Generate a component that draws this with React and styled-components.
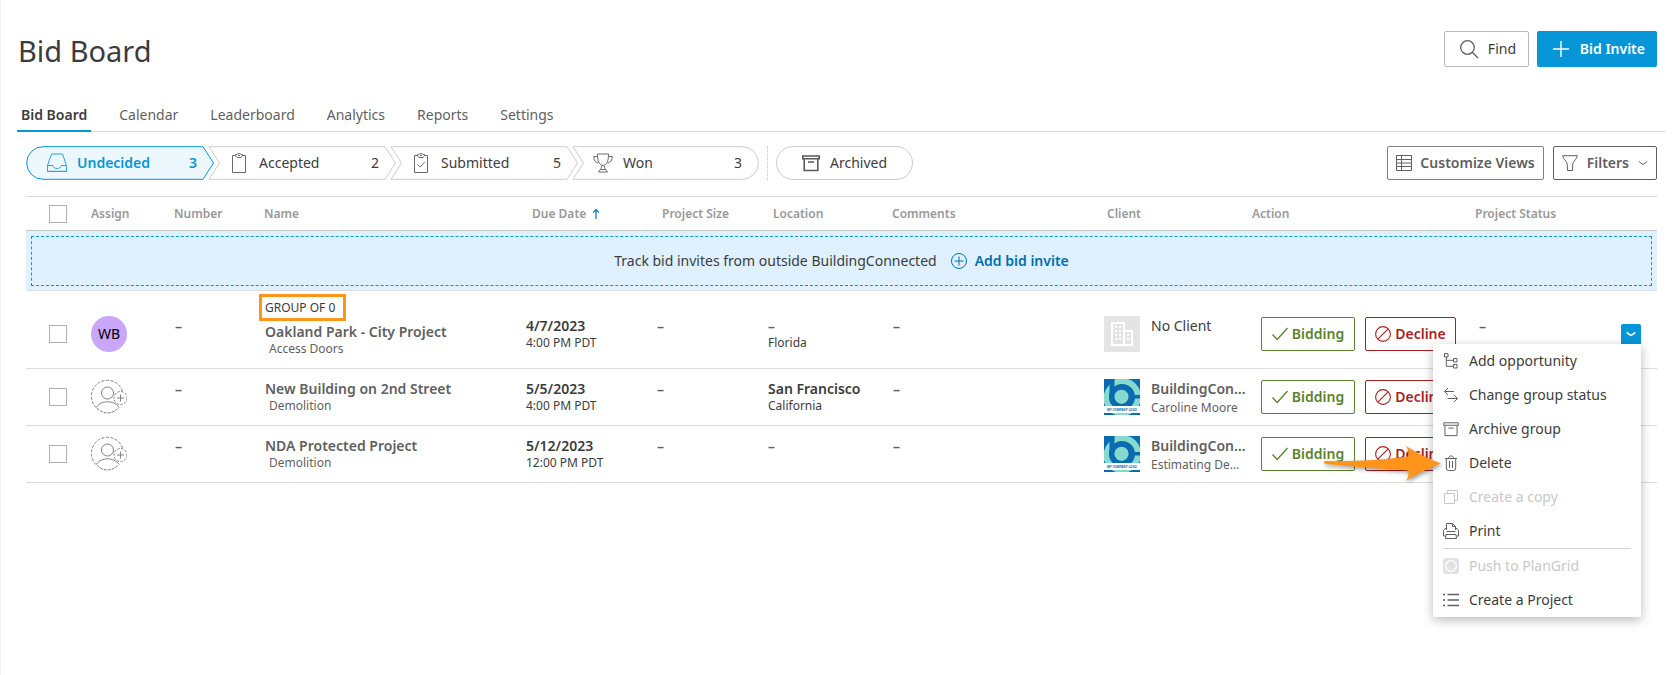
import React from 'react';
import styled, { createGlobalStyle, css } from 'styled-components';

const colors = {
  text: '#3c3c3c',
  soft: '#5f5f5f',
  muted: '#999999',
  line: '#dcdcdc',
  blue: '#0696d7',
  link: '#006eaf',
  green: '#5a8228',
  red: '#aa1e1e',
  orange: '#ff941a',
};

const GlobalStyle = createGlobalStyle`
  *, *::before, *::after { box-sizing: border-box; }
  body {
    margin: 0;
    background: #fff;
    color: ${colors.text};
    font: 400 14px/18px "Noto Sans", sans-serif;
  }
  button, input { font: inherit; color: inherit; margin: 0; }
  button { cursor: pointer; }
`;

/* ---------- icons ---------- */

const Svg = styled.svg`
  display: block;
  flex: none;
  fill: none;
  stroke: currentColor;
  stroke-width: ${(p) => p.$stroke || 1};
`;

const Icon = ({ size = 20, box = 20, stroke, children }) => (
  <Svg width={size} height={size} viewBox={`0 0 ${box} ${box}`} $stroke={stroke} aria-hidden="true">
    {children}
  </Svg>
);

const SearchIcon = () => (
  <Icon stroke={1.3}>
    <circle cx="8.5" cy="8.5" r="6.8" />
    <path d="M13.3 13.3 19 19" />
  </Icon>
);
const PlusIcon = () => (
  <Icon size={16} box={16} stroke={1.4}>
    <path d="M8 0v16M0 8h16" />
  </Icon>
);
const InboxIcon = () => (
  <Icon>
    <path d="M.5 12.5 4.5 1h11l4 11.5v6H.5zM.5 12.5h5.3c.5 2 2 3 4.2 3s3.7-1 4.2-3h5.3M.5 18.3h19" />
  </Icon>
);
const ClipboardIcon = ({ checked }) => (
  <Icon>
    <path d="M6.5 2.5H3.500v17h13v-17H13.500" />
    <path d="M6.500 1.500h1.500C8.300.300 11.700.300 12 1.500h1.500v1.200L12 4.500H8L6.500 2.700z" />
    <path d="M9 2.500h2" />
    {checked && <path d="m6.500 11.500 2.700 2.500 4.500-5" />}
  </Icon>
);
const TrophyIcon = () => (
  <Icon>
    <path d="M4.500 1h11c0 6-1 11-5.500 11.500C5.500 12 4.500 7 4.500 1zM4.500 3.500H.700c0 4 1.800 6 4.500 6.500M15.500 3.500h3.800c0 4-1.800 6-4.500 6.500M8.700 12.500c0 2.500-1 3.500-3.200 6.500h9c-2.200-3-3.200-4-3.200-6.500M7.500 16.500h5" />
  </Icon>
);
const ArchiveIcon = ({ size = 18, stroke = 1.6 }) => (
  <Icon size={size} box={18} stroke={stroke}>
    <path d="M.8 2h16.400v2.800H.800zM2.200 5v11.500h13.600V5M6 8h6" />
  </Icon>
);
const GridIcon = () => (
  <Icon size={16} box={16}>
    <path d="M.5.500h15v15H.500zM5.500.500v15M.500 4.500h15M.500 8h15M.500 11.500h15" />
  </Icon>
);
const FilterIcon = () => (
  <Icon size={16} box={16}>
    <path d="M.700.700h14.600C15 4 12 5.500 10.800 8.500L10.500 15.500h-5l-.3-7C4 5.500 1 4 .700.700z" />
  </Icon>
);
const ChevronIcon = ({ stroke }) => (
  <Icon size={10} box={10} stroke={stroke}>
    <path d="M.800 3.300C2 4.300 4 6.300 5 6.300s3-2 4.200-3" />
  </Icon>
);
const SortIcon = () => (
  <Icon size={10} box={10} stroke={1.2}>
    <path d="M5 .500V10M2 3.700l3-3 3 3" />
  </Icon>
);
const CirclePlusIcon = () => (
  <Icon size={16} box={16}>
    <circle cx="8" cy="8" r="7.5" />
    <path d="M8 3.500v9M3.500 8h9" />
  </Icon>
);
const CheckIcon = () => (
  <Icon size={16} box={16} stroke={1.3}>
    <path d="m.500 8.500 4.700 5L15.500 2" />
  </Icon>
);
const BlockIcon = () => (
  <Icon size={16} box={16} stroke={1.1}>
    <circle cx="8" cy="8" r="7.4" />
    <path d="M2.800 13.200 13.200 2.800" />
  </Icon>
);
const AssignIcon = () => (
  <Icon size={36} box={36}>
    <g stroke="#808080">
      <path d="M31.500 12A16 16 0 1 0 5 28.500" strokeDasharray="3 1.5" />
      <path d="M6 29.200c3 3 6.500 4.800 10.500 4.800s8-2 10.500-4.800" strokeDasharray="3 1" />
      <circle cx="16.5" cy="14" r="6" />
      <path d="M5.300 28.500C8 24.500 12 22.800 16.500 22.800S25.500 24.500 28.200 28.500" />
      <circle cx="29.5" cy="19" r="6.5" strokeDasharray="2.5 1.3" />
      <path d="M29.500 15.500v7M26 19h7" />
    </g>
  </Icon>
);
const BuildingIcon = () => (
  <svg width="36" height="36" viewBox="0 0 36 36" role="img" aria-label="No client logo">
    <path fill="#e4e4e4" d="M0 0h36v36H0z" />
    <path fill="none" stroke="#fff" strokeWidth="2" d="M8 7h12v22H8zM20 15h8v14h-8z" />
    <path
      fill="#fff"
      d="M11 10h2v2h-2zm4 0h2v2h-2zm-4 4h2v2h-2zm4 0h2v2h-2zm-4 4h2v2h-2zm4 0h2v2h-2zm-4 4h2v2h-2zm4 0h2v2h-2zM23 18h2v2h-2zm0 4h2v2h-2z"
    />
  </svg>
);
const CompanyLogo = () => (
  <svg width="36" height="36" viewBox="0 0 36 36" role="img" aria-label="Company logo">
    <path fill="#0a6bb0" d="M0 0h36v36H0z" />
    <circle cx="18" cy="18" r="16" fill="none" stroke="#86d9cd" strokeWidth="6" />
    <path fill="#0a6bb0" d="M5.500 0h5v18h-5zM28 16h8v3.500h-8z" />
    <path fill="#0a6bb0" d="M0 0h6v5Q2 9 0 15z" />
    <circle cx="17.5" cy="17.8" r="9.6" fill="#86d9cd" stroke="#0a6bb0" strokeWidth="5" />
    <path fill="#fff" d="M0 27h36v7H0z" />
    <text x="18" y="32" fontSize="3" fontWeight="700" textAnchor="middle" fill="#0a6bb0">
      MY COMPANY LOGO
    </text>
  </svg>
);
const TreeIcon = () => (
  <Icon size={16} box={16}>
    <path d="M1.500.500h3.500v3.500H1.500zM10.500 5.500H14V9h-3.500zM10.500 11.500H14V15h-3.500zM3.300 4v9.300h7.200M3.300 7.300h7.200" />
  </Icon>
);
const SwapIcon = () => (
  <Icon size={16} box={16}>
    <path d="M11 4.500H1.500M5 1 1.500 4.500 5 8M4.500 11.500h10M11 8l3.500 3.500L11 15" />
  </Icon>
);
const TrashIcon = () => (
  <Icon size={16} box={16}>
    <path d="M2 3.500h12M5.500 3.500c0-3.500 5-3.500 5 0M3.300 3.500v9.500q0 2.500 2 2.500h5.400q2 0 2-2.500V3.500M6.500 6v7M9.500 6v7" />
  </Icon>
);
const CopyIcon = () => (
  <Icon size={16} box={16}>
    <path d="M1.500 4.500h10v10h-10zM4.500 4.500v-3h10v10h-3" />
  </Icon>
);
const PrintIcon = () => (
  <Icon size={16} box={16}>
    <path d="M3.500 7V.500h6l3 3V7M9.500.500v3h3M3.500 5.500H2L.500 7.500v5.500H2.500M12.500 5.500H14l1.500 2v5.500h-2M3.500 8.500h9M3 11.500h10l.5 4h-11z" />
  </Icon>
);
const PlanGridIcon = () => (
  <svg width="16" height="16" viewBox="0 0 16 16" aria-hidden="true">
    <rect width="16" height="16" rx="3" fill="#e2e2e2" />
    <circle cx="8" cy="8" r="5.3" fill="#e2e2e2" stroke="#fff" strokeWidth="1.3" />
  </svg>
);
const ListIcon = () => (
  <Icon size={16} box={16} stroke={1.3}>
    <path d="M0 2.500h2M0 8h2M0 13.500h2M4.500 2.500H16M4.500 8H16M4.500 13.500H16" />
  </Icon>
);

/* ---------- page frame ---------- */

const Page = styled.div`
  min-height: 100vh;
  border-left: 1px solid #f3f3f3;
  padding-left: 16px;
`;

const Header = styled.header`
  display: flex;
  justify-content: space-between;
  align-items: flex-start;
  padding: 31px 18px 29px 1px;
`;

const Title = styled.h1`
  margin: 0;
  font-size: 29px;
  font-weight: 400;
  line-height: 40px;
`;

const HeaderActions = styled.div`
  display: flex;
  gap: 8px;
`;

const HeaderButton = styled.button`
  display: flex;
  align-items: center;
  justify-content: space-between;
  height: 36px;
  border-radius: 2px;
  ${(p) =>
    p.$primary
      ? css`
          width: 120px;
          padding: 0 12px 0 16px;
          border: 0;
          background: ${colors.blue};
          color: #fff;
          font-weight: 600;
        `
      : css`
          width: 85px;
          padding: 0 12px 0 14px;
          border: 1px solid #b8b8b8;
          background: #fff;
          color: ${colors.text};
          svg { color: ${colors.soft}; }
        `}
`;

const Tabs = styled.nav`
  display: flex;
  gap: 24px;
  height: 32px;
  margin-right: 9px;
  border-bottom: 1px solid ${colors.line};
`;

const Tab = styled.a`
  height: 32px;
  padding: 6px 4px 0;
  color: ${colors.soft};
  text-decoration: none;
  border-bottom: 2px solid transparent;
  ${(p) =>
    p.$active &&
    css`
      color: ${colors.text};
      font-weight: 600;
      border-color: ${colors.blue};
    `}
`;

/* ---------- pipeline bar ---------- */

const Content = styled.main`
  padding: 14px 18px 0 9px;
`;

const Toolbar = styled.div`
  display: flex;
  justify-content: space-between;
  margin-bottom: 16px;
`;

const Group = styled.div`
  display: flex;
  gap: ${(p) => p.$gap || 0}px;
`;

const StageButton = styled.button`
  position: relative;
  display: flex;
  align-items: center;
  gap: 10px;
  width: ${(p) => p.$width}px;
  height: 34px;
  padding: 0 17px 0 21px;
  border: 0;
  background: none;
  text-align: left;
  color: ${(p) => (p.$active ? colors.blue : colors.text)};
  font-weight: ${(p) => (p.$active ? 600 : 400)};
  & + & { margin-left: -6px; }
  & > svg:not(:first-child) {
    position: relative;
    color: ${(p) => (p.$active ? '#2fa3dc' : '#6a6a6a')};
  }
`;

const StageShape = styled.svg`
  position: absolute;
  inset: 0;
  stroke: ${(p) => (p.$active ? colors.blue : '#cccccc')};
  fill: ${(p) => (p.$active ? '#edf7fe' : 'none')};
`;

const StageLabel = styled.span`
  position: relative;
  flex: 1;
`;

const StageCount = styled.span`
  position: relative;
`;

const Divider = styled.span`
  width: 1px;
  height: 34px;
  margin: 0 8px;
  border-left: 1px dotted #c4c4c4;
`;

const ArchivedButton = styled.button`
  display: flex;
  align-items: center;
  gap: 10px;
  height: 34px;
  padding: 0 25px;
  border: 1px solid #cccccc;
  border-radius: 17px;
  background: #fff;
  svg { color: #5a5a5a; }
`;

const OutlineButton = styled.button`
  display: flex;
  align-items: center;
  gap: ${(p) => p.$gap || 8}px;
  height: 34px;
  padding: 0 8px;
  border: 1px solid ${(p) => p.$border || '#808080'};
  border-radius: 2px;
  background: #fff;
  color: ${colors.soft};
  font-weight: 600;
`;

/* ---------- table ---------- */

const Table = styled.table`
  width: 100%;
  table-layout: fixed;
  border-spacing: 0;
`;

const HeadCell = styled.th`
  height: 35px;
  padding: 0 0 0 ${(p) => p.$indent || 0}px;
  border-top: 1px solid ${colors.line};
  border-bottom: 1px solid #c8c8c8;
  color: ${colors.muted};
  font-size: 12px;
  font-weight: 600;
  text-align: left;
  white-space: nowrap;
`;

const SortLabel = styled.span`
  display: flex;
  align-items: center;
  gap: 5px;
  svg { color: ${colors.link}; }
`;

const Cell = styled.td`
  height: ${(p) => (p.$tall ? 78 : 57)}px;
  padding: ${(p) => (p.$tall ? 9 : 0)}px 0 0 ${(p) => p.$indent || 0}px;
  border-bottom: 1px solid ${colors.line};
  vertical-align: middle;
`;

const NameCell = styled(Cell)`
  padding-top: 0;
  padding-bottom: ${(p) => (p.$tall ? 8 : 0)}px;
`;

const Checkbox = styled.input.attrs({ type: 'checkbox' })`
  display: block;
  appearance: none;
  width: 18px;
  height: 18px;
  margin: 0 0 0 23px;
  border: 1px solid #b0b0b0;
  background: #fff;
`;

const BannerCell = styled.td`
  height: 60px;
  padding: 5px 5px 4px;
  background: #dff1fe;
  border-bottom: 1px solid ${colors.line};
`;

const Banner = styled.div`
  display: flex;
  align-items: center;
  justify-content: center;
  gap: 14px;
  height: 50px;
  border: 1px dashed ${colors.blue};
`;

const BannerLink = styled.button`
  display: flex;
  align-items: center;
  gap: 8px;
  padding: 0;
  border: 0;
  background: none;
  color: ${colors.link};
  font-weight: 600;
`;

const Avatar = styled.div`
  display: grid;
  place-items: center;
  width: 36px;
  height: 36px;
  border-radius: 50%;
  background: #c9a6f9;
  color: #000;
`;

const AssignButton = styled.button`
  display: block;
  padding: 0;
  border: 0;
  background: none;
`;

const Lines = styled.div`
  min-width: 0;
  min-height: 34px;
`;

const Primary = styled.div`
  line-height: 17px;
  font-weight: ${(p) => (p.$plain ? 400 : 600)};
  color: ${(p) => (p.$soft ? colors.soft : colors.text)};
  white-space: nowrap;
`;

const Secondary = styled.div`
  padding-left: ${(p) => p.$indent || 0}px;
  font-size: 12px;
  line-height: 17px;
  color: ${(p) => (p.$soft ? colors.soft : colors.text)};
  white-space: nowrap;
`;

const GroupTag = styled.div`
  width: 87px;
  margin: 0 0 2px -6px;
  padding: 2px 3px;
  border: 3px solid ${colors.orange};
  font-size: 12px;
  line-height: 17px;
  white-space: nowrap;
`;

const Client = styled.div`
  display: flex;
  gap: 11px;
  svg { flex: none; }
`;

const ClientLines = styled.div`
  display: grid;
  align-content: start;
  gap: 2px;
  padding-top: 1px;
`;

const ActionRow = styled.div`
  display: flex;
  gap: 10px;
`;

const ActionButton = styled.button`
  display: flex;
  align-items: center;
  justify-content: center;
  gap: 4px;
  width: ${(p) => (p.$decline ? 91 : 94)}px;
  height: 34px;
  padding: 0;
  border: 1px solid currentColor;
  border-radius: 2px;
  background: #fff;
  color: ${(p) => (p.$decline ? colors.red : colors.green)};
  font-weight: 600;
`;

/* ---------- row menu ---------- */

const MenuAnchor = styled.div`
  position: relative;
  width: 20px;
`;

const MenuToggle = styled.button`
  display: grid;
  place-items: center;
  width: 20px;
  height: 20px;
  padding: 0;
  border: 0;
  border-radius: 2px 2px 0 0;
  background: ${colors.blue};
  color: #fff;
`;

const Menu = styled.div`
  position: absolute;
  z-index: 2;
  top: 100%;
  right: 0;
  width: 208px;
  background: #fff;
  box-shadow: 0 3px 10px rgba(0, 0, 0, 0.28);
`;

const MenuItem = styled.button`
  display: flex;
  align-items: center;
  gap: 10px;
  width: 100%;
  height: 34px;
  padding: 0 10px;
  border: 0;
  background: none;
  white-space: nowrap;
  color: ${colors.text};
  svg { color: ${colors.soft}; }
  &:disabled {
    color: #c8c8c8;
    svg { color: #c8c8c8; }
  }
`;

const MenuRule = styled.hr`
  height: 1px;
  margin: 0 10px;
  border: 0;
  background: #d4d4d4;
`;

const Pointer = styled.svg`
  position: absolute;
  top: 98px;
  right: 198px;
  pointer-events: none;
  filter: drop-shadow(1px 2px 2px rgba(0, 0, 0, 0.4));
`;

/* ---------- data ---------- */

const tabs = ['Bid Board', 'Calendar', 'Leaderboard', 'Analytics', 'Reports', 'Settings'];

const middleOutline = 'M1 .7H177L187.500 17 177 33.300H1L11.500 17z';

const stages = [
  { label: 'Undecided', count: 3, width: 188, icon: <InboxIcon />, active: true, outline: 'M17 .7H177L187.500 17 177 33.300H17A16.300 16.300 0 0 1 17 .7z' },
  { label: 'Accepted', count: 2, width: 188, icon: <ClipboardIcon />, outline: middleOutline },
  { label: 'Submitted', count: 5, width: 188, icon: <ClipboardIcon checked />, outline: middleOutline },
  { label: 'Won', count: 3, width: 187, icon: <TrophyIcon />, outline: 'M1 .7H170A16.300 16.300 0 0 1 170 33.300H1L11.500 17z' },
];

const columns = [
  { label: 'Assign', width: 83 },
  { label: 'Number', width: 90 },
  { label: 'Name' },
  { label: 'Due Date', width: 131, indent: 7, sorted: true },
  { label: 'Project Size', width: 112, indent: 6 },
  { label: 'Location', width: 124, indent: 5 },
  { label: 'Comments', width: 212 },
  { label: 'Client', width: 148, indent: 3 },
  { label: 'Action', width: 223 },
  { label: 'Project Status', width: 146 },
];

const rows = [
  {
    initials: 'WB', group: 'GROUP OF 0', name: 'Oakland Park - City Project', trade: 'Access Doors',
    date: '4/7/2023', time: '4:00 PM PDT', city: '–', state: 'Florida', client: 'No Client', menu: true,
  },
  {
    name: 'New Building on 2nd Street', trade: 'Demolition', date: '5/5/2023', time: '4:00 PM PDT',
    city: 'San Francisco', state: 'California', client: 'BuildingCon…', contact: 'Caroline Moore',
  },
  {
    name: 'NDA Protected Project', trade: 'Demolition', date: '5/12/2023', time: '12:00 PM PDT',
    city: '–', client: 'BuildingCon…', contact: 'Estimating De…',
  },
];

const menuItems = [
  { label: 'Add opportunity', icon: <TreeIcon /> },
  { label: 'Change group status', icon: <SwapIcon /> },
  { label: 'Archive group', icon: <ArchiveIcon size={16} stroke={1.1} /> },
  { label: 'Delete', icon: <TrashIcon /> },
  { label: 'Create a copy', icon: <CopyIcon />, disabled: true },
  { label: 'Print', icon: <PrintIcon /> },
  { rule: true },
  { label: 'Push to PlanGrid', icon: <PlanGridIcon />, disabled: true },
  { label: 'Create a Project', icon: <ListIcon /> },
];

/* ---------- composed parts ---------- */

const Stage = ({ label, count, width, icon, active, outline }) => (
  <StageButton type="button" $width={width} $active={active}>
    <StageShape width={width} height="34" $active={active} aria-hidden="true">
      <path d={outline} />
    </StageShape>
    {icon}
    <StageLabel>{label}</StageLabel>
    <StageCount>{count}</StageCount>
  </StageButton>
);

const Dash = () => (
  <Lines>
    <Primary $soft>–</Primary>
  </Lines>
);

const RowMenu = () => (
  <MenuAnchor>
    <MenuToggle type="button" aria-label="Row actions" aria-expanded="true">
      <ChevronIcon stroke={1.6} />
    </MenuToggle>
    <Menu role="menu">
      {menuItems.map((item, i) =>
        item.rule ? (
          <MenuRule key={i} />
        ) : (
          <MenuItem key={item.label} type="button" role="menuitem" disabled={item.disabled}>
            {item.icon}
            {item.label}
          </MenuItem>
        )
      )}
      <Pointer width="120" height="44" viewBox="0 0 120 44" aria-hidden="true">
        <path fill={colors.orange} d="M1 21 Q0 19 3 19Q45 20 85 14.500Q87 10 83 4Q98 14 118 21.500Q98 29 83 39Q87 33 85 28.500Q45 26 3 22Z" />
      </Pointer>
    </Menu>
  </MenuAnchor>
);

const BidRow = ({ row }) => {
  const tall = Boolean(row.group);
  return (
    <tr>
      <Cell $tall={tall}>
        <Checkbox aria-label={`Select ${row.name}`} />
      </Cell>
      <Cell $tall={tall}>
        {row.initials ? (
          <Avatar>{row.initials}</Avatar>
        ) : (
          <AssignButton type="button" aria-label="Assign member">
            <AssignIcon />
          </AssignButton>
        )}
      </Cell>
      <Cell $tall={tall} $indent={1}><Dash /></Cell>
      <NameCell $tall={tall} $indent={1}>
        {row.group && <GroupTag>{row.group}</GroupTag>}
        <Primary $soft>{row.name}</Primary>
        <Secondary $soft $indent={4}>{row.trade}</Secondary>
      </NameCell>
      <Cell $tall={tall} $indent={1}>
        <Lines>
          <Primary>{row.date}</Primary>
          <Secondary>{row.time}</Secondary>
        </Lines>
      </Cell>
      <Cell $tall={tall} $indent={1}><Dash /></Cell>
      <Cell $tall={tall}>
        <Lines>
          <Primary $soft={row.city === '–'}>{row.city}</Primary>
          {row.state && <Secondary>{row.state}</Secondary>}
        </Lines>
      </Cell>
      <Cell $tall={tall} $indent={1}><Dash /></Cell>
      <Cell $tall={tall}>
        <Client>
          {row.contact ? <CompanyLogo /> : <BuildingIcon />}
          <ClientLines>
            <Primary $soft={Boolean(row.contact)} $plain={!row.contact}>{row.client}</Primary>
            {row.contact && <Secondary $soft>{row.contact}</Secondary>}
          </ClientLines>
        </Client>
      </Cell>
      <Cell $tall={tall} $indent={9}>
        <ActionRow>
          <ActionButton type="button"><CheckIcon />Bidding</ActionButton>
          <ActionButton type="button" $decline><BlockIcon />Decline</ActionButton>
        </ActionRow>
      </Cell>
      <Cell $tall={tall} $indent={4}>{row.menu && <Dash />}</Cell>
      <Cell $tall={tall}>{row.menu && <RowMenu />}</Cell>
    </tr>
  );
};

export default function App() {
  return (
    <Page>
      <GlobalStyle />
      <Header>
        <Title>Bid Board</Title>
        <HeaderActions>
          <HeaderButton type="button"><SearchIcon />Find</HeaderButton>
          <HeaderButton type="button" $primary><PlusIcon />Bid Invite</HeaderButton>
        </HeaderActions>
      </Header>
      <Tabs>
        {tabs.map((tab, i) => (
          <Tab key={tab} href="#" $active={i === 0}>{tab}</Tab>
        ))}
      </Tabs>
      <Content>
        <Toolbar>
          <Group>
            {stages.map((stage) => (
              <Stage key={stage.label} {...stage} />
            ))}
            <Divider />
            <ArchivedButton type="button"><ArchiveIcon />Archived</ArchivedButton>
          </Group>
          <Group $gap={9}>
            <OutlineButton type="button"><GridIcon />Customize Views</OutlineButton>
            <OutlineButton type="button" $border="#5f5f5f" $gap={9}><FilterIcon />Filters<ChevronIcon /></OutlineButton>
          </Group>
        </Toolbar>
        <Table>
          <colgroup>
            <col width="65" />
            {columns.map((c) => (
              <col key={c.label} width={c.width} />
            ))}
            <col width="36" />
          </colgroup>
          <thead>
            <tr>
              <HeadCell><Checkbox aria-label="Select all" /></HeadCell>
              {columns.map((c) => (
                <HeadCell key={c.label} $indent={c.indent}>
                  {c.sorted ? <SortLabel>{c.label}<SortIcon /></SortLabel> : c.label}
                </HeadCell>
              ))}
              <HeadCell />
            </tr>
          </thead>
          <tbody>
            <tr>
              <BannerCell colSpan={12}>
                <Banner>
                  <span>Track bid invites from outside BuildingConnected</span>
                  <BannerLink type="button"><CirclePlusIcon />Add bid invite</BannerLink>
                </Banner>
              </BannerCell>
            </tr>
            {rows.map((row) => (
              <BidRow key={row.name} row={row} />
            ))}
          </tbody>
        </Table>
      </Content>
    </Page>
  );
}
